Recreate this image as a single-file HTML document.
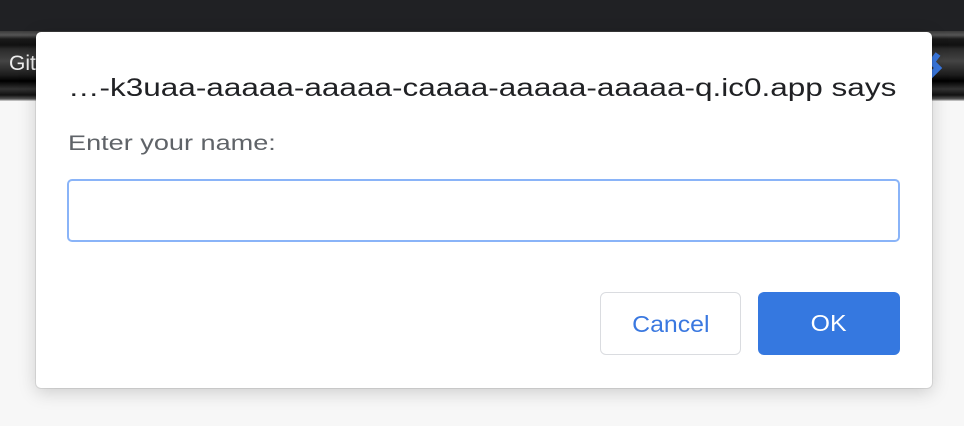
<!DOCTYPE html>
<html><head><style>
body{margin:0;width:964px;height:426px;overflow:hidden;background:#f7f7f7;font-family:"Liberation Sans",sans-serif;position:relative}
.top{position:absolute;left:0;top:0;width:964px;height:31px;background:#202124}
.band{position:absolute;left:0;top:31px;width:964px;height:70px;background:linear-gradient(#3a3a3a 0,#555 4px,#1a1a1a 8px,#111 14px,#2a2a2a 18px,#444 30px,#1c1c1c 44px,#000 50px,#333 58px,#111 64px,#555 68px,#ddd 70px)}
.gi{position:absolute;left:9px;top:52px;color:#eee;font-size:21px}
.x{position:absolute;left:924px;top:50px}
.dlg{position:absolute;left:36px;top:32px;width:896px;height:356px;background:#fff;border-radius:5px;box-shadow:0 4px 18px rgba(0,0,0,.18),0 0 0 1px rgba(0,0,0,.08)}
.t{position:absolute;left:32px;top:42px;font-size:25px;color:#202124;white-space:nowrap;transform:scaleX(1.26);transform-origin:0 0}
.l{position:absolute;left:32px;top:100px;font-size:21px;color:#5f6368;white-space:nowrap;transform:scaleX(1.29);transform-origin:0 0}
.in{position:absolute;left:31px;top:147px;width:829px;height:59px;border:2px solid #8ab4f8;border-radius:5px}
.b{position:absolute;top:260px;width:141px;height:63px;border-radius:6px;font-size:23px;line-height:63px;text-align:center;box-sizing:border-box}
.b span{display:inline-block;transform:scaleX(1.08)}
.c{left:564px;border:1px solid #dadce0;color:#3a78e0}
.o{left:722px;width:142px;background:#3578e0;color:#fff}
</style></head><body>
<div class="top"></div><div class="band"></div>
<div class="gi">Git</div>
<svg class="x" width="30" height="30" viewBox="0 0 30 30"><path d="M14 4 L8 12 L14 18 L6 26" stroke="#3a78e0" stroke-width="6" fill="none"/></svg>
<div class="dlg">
<div class="t">…-k3uaa-aaaaa-aaaaa-caaaa-aaaaa-aaaaa-q.ic0.app says</div>
<div class="l">Enter your name:</div>
<div class="in"></div>
<div class="b c"><span>Cancel</span></div>
<div class="b o"><span>OK</span></div>
</div>
</body></html>
